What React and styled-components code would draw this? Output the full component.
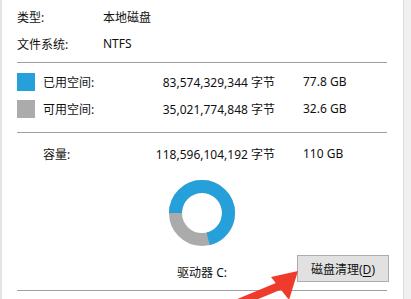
import React from "react";
import styled, { createGlobalStyle } from "styled-components";

const Global = createGlobalStyle`
  html, body { margin: 0; padding: 0; background: #fff; }
  body { font-family: "Noto Sans", "Noto Sans CJK SC", sans-serif; font-size: 12px; color: #111; }
`;

const Frame = styled.div`
  position: relative;
  width: 411px;
  height: 299px;
  display: flex;
  overflow: hidden;
  background: #fff;
`;

const Panel = styled.div`
  flex: 1;
  border-left: 2px solid #e4e4e4;
  border-right: 1px solid #dcdcdc;
  padding: 3px 16px 0 15px;
  display: flex;
  flex-direction: column;
`;

const Strip = styled.div`
  width: 7px;
  background: #f0f0f0;
`;

const InfoRow = styled.div`
  height: 27px;
  display: grid;
  grid-template-columns: 86px 1fr;
  align-items: center;
`;

const Separator = styled.div`
  height: 1px;
  background: #a0a0a0;
  margin-top: ${(p) => p.$top}px;
`;

const UsageGrid = styled.div`
  display: grid;
  grid-template-columns: 26px 100px 132px 1fr;
  grid-auto-rows: 27px;
  align-items: center;
  margin-top: ${(p) => p.$top}px;
`;

const Swatch = styled.div`
  width: 18px;
  height: 18px;
  background: ${(p) => p.$color};
`;

const Value = styled.div`
  text-align: right;
  white-space: nowrap;
`;

const Size = styled.div`
  padding-left: 28px;
  white-space: nowrap;
`;

const Label = styled.div`
  white-space: nowrap;
`;

const DonutWrap = styled.div`
  margin-top: 13px;
  height: 66px;
  display: flex;
  justify-content: center;
`;

const Footer = styled.div`
  margin-top: 9px;
  height: 27px;
  display: grid;
  grid-template-columns: 1fr auto 1fr;
  align-items: end;
`;

const DriveLabel = styled.div`
  grid-column: 2;
  padding-bottom: 1px;
  white-space: nowrap;
`;

const CleanButton = styled.button`
  grid-column: 3;
  justify-self: end;
  margin-right: -2px;
  width: 92px;
  height: 27px;
  box-sizing: border-box;
  background: #e1e1e1;
  border: 1px solid #adadad;
  font-family: inherit;
  font-size: 12px;
  color: #111;
  padding: 0;
  u { text-underline-offset: 2px; }
`;

const Arrow = styled.svg`
  position: absolute;
  left: 0;
  top: 0;
  pointer-events: none;
`;

const BLUE = "#26a0da";
const GRAY = "#ababab";

function Donut({ ratio }) {
  const r = 26.5;
  const c = 2 * Math.PI * r;
  return (
    <svg width="66" height="66" viewBox="0 0 66 66">
      <circle cx="33" cy="33" r={r} fill="none" stroke={GRAY} strokeWidth="13" />
      <circle
        cx="33"
        cy="33"
        r={r}
        fill="none"
        stroke={BLUE}
        strokeWidth="13"
        strokeDasharray={`${c * ratio} ${c}`}
        transform="rotate(180 33 33)"
      />
    </svg>
  );
}

export default function App() {
  return (
    <>
      <Global />
      <Frame>
        <Panel>
          <InfoRow>
            <Label>类型:</Label>
            <Label>本地磁盘</Label>
          </InfoRow>
          <InfoRow>
            <Label>文件系统:</Label>
            <Label>NTFS</Label>
          </InfoRow>
          <Separator $top={5} />
          <UsageGrid $top={5}>
            <Swatch $color={BLUE} />
            <Label>已用空间:</Label>
            <Value>83,574,329,344 字节</Value>
            <Size>77.8 GB</Size>
            <Swatch $color={GRAY} />
            <Label>可用空间:</Label>
            <Value>35,021,774,848 字节</Value>
            <Size>32.6 GB</Size>
          </UsageGrid>
          <Separator $top={10} />
          <UsageGrid $top={7}>
            <span />
            <Label>容量:</Label>
            <Value>118,596,104,192 字节</Value>
            <Size>110 GB</Size>
          </UsageGrid>
          <DonutWrap>
            <Donut ratio={77.8 / 110} />
          </DonutWrap>
          <Footer>
            <DriveLabel>驱动器 C:</DriveLabel>
            <CleanButton>
              磁盘清理(<u>D</u>)
            </CleanButton>
          </Footer>
          <Separator $top={8} />
        </Panel>
        <Strip />
        <Arrow width="411" height="299" viewBox="0 0 411 299">
          <line x1="284" y1="284" x2="226" y2="308" stroke="#ee3b2c" strokeWidth="8" />
          <polygon points="298,271 271,277 289,300" fill="#ee3b2c" />
        </Arrow>
      </Frame>
    </>
  );
}
